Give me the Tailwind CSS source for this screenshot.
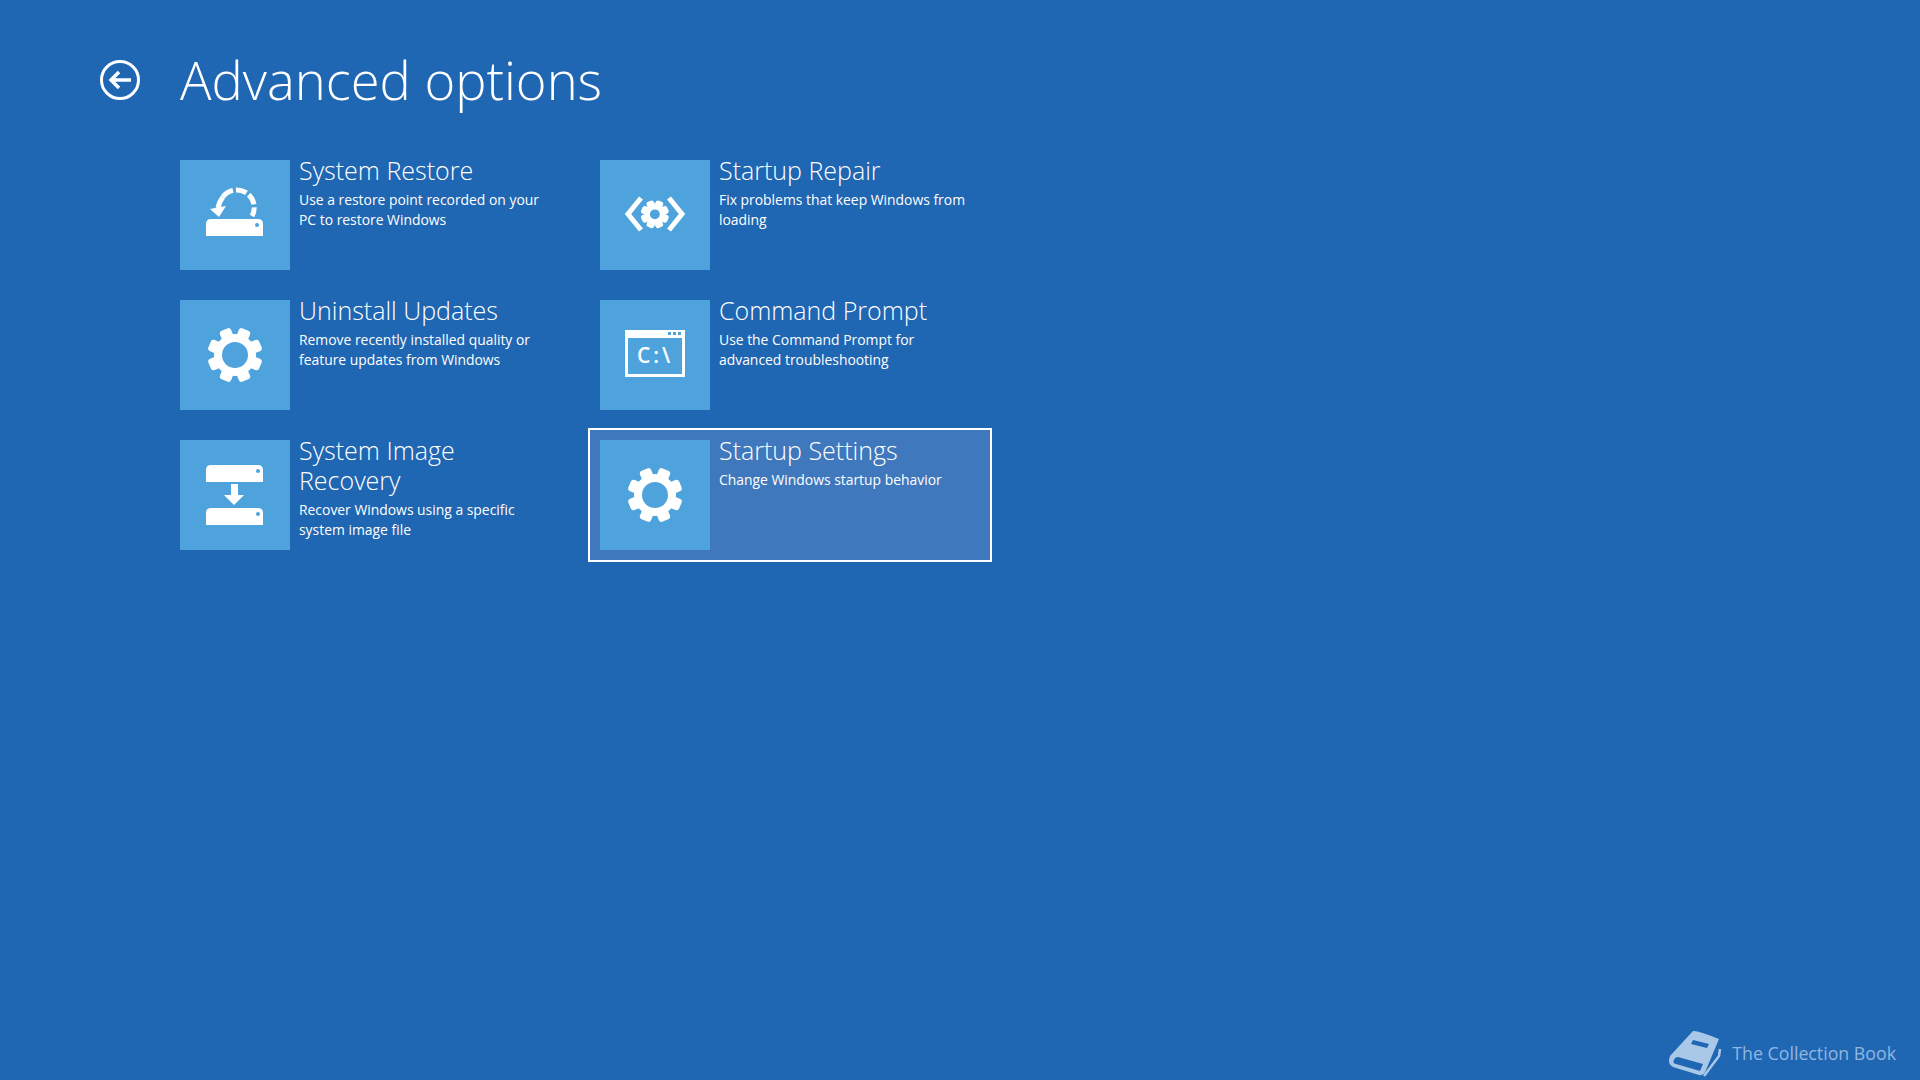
<!DOCTYPE html>
<html lang="en">
  <head>
    <meta charset="UTF-8" />
    <title>Advanced options</title>
    <script src="https://cdn.jsdelivr.net/npm/@tailwindcss/browser@4"></script>
  </head>
  <body class="bg-[#1f66b3] font-['Open_Sans',sans-serif] text-white">
    <svg class="hidden">
      <symbol id="gear" viewBox="0 0 110 110">
        <g fill="#fff">
          <rect x="49" y="27.5" width="12" height="55" rx="3" transform="rotate(22.5 55 55)" />
          <rect x="49" y="27.5" width="12" height="55" rx="3" transform="rotate(67.5 55 55)" />
          <rect x="49" y="27.5" width="12" height="55" rx="3" transform="rotate(112.5 55 55)" />
          <rect x="49" y="27.5" width="12" height="55" rx="3" transform="rotate(157.5 55 55)" />
        </g>
        <circle cx="55" cy="55" r="17" fill="none" stroke="#fff" stroke-width="8" />
        <circle cx="55" cy="55" r="13" fill="#4fa3dd" />
      </symbol>
    </svg>

    <div class="flex h-screen w-full flex-col overflow-hidden">
      <header class="flex h-[148px] items-start pt-[45px]">
        <a href="#" class="ml-[100px] mt-[15px] block h-10 w-10">
          <svg viewBox="0 0 40 40" class="h-10 w-10" fill="none" stroke="#fff">
            <circle cx="20" cy="20" r="18.5" stroke-width="3" />
            <path d="M31 20H11M19 12l-8 8 8 8" stroke-width="3.5" />
          </svg>
        </a>
        <h1 class="ml-10 text-[52.5px] leading-[70px] font-light">Advanced options</h1>
      </header>

      <main class="ml-[168px] grid w-[824px] grid-cols-2 gap-x-4 gap-y-[6px]">
        <button class="flex h-[134px] w-[404px] border-2 border-transparent p-[10px] text-left">
          <span class="block h-[110px] w-[110px] shrink-0 bg-[#4fa3dd]">
            <svg viewBox="0 0 110 110" class="h-[110px] w-[110px]">
              <path d="M26 64q0-5 5-5h47q5 0 5 5v12H26z" fill="#fff" />
              <circle cx="77" cy="65" r="2" fill="#4fa3dd" />
              <path d="M72 56A17.5 17.5 0 0 0 42 38" fill="none" stroke="#fff" stroke-width="5" stroke-dasharray="9 3 11 3 11 3 12" />
              <path d="M43 37Q39 42 38 48" fill="none" stroke="#fff" stroke-width="5" />
              <path d="M30 49l16-3-7 11z" fill="#fff" />
            </svg>
          </span>
          <span class="ml-[9px] block w-[255px]">
            <span class="-mt-[5px] block text-[25px] leading-[30px] font-light">System Restore</span>
            <span class="mt-[5px] block text-[13.9px] leading-5">Use a restore point recorded on your PC to restore Windows</span>
          </span>
        </button>

        <button class="flex h-[134px] w-[404px] border-2 border-transparent p-[10px] text-left">
          <span class="block h-[110px] w-[110px] shrink-0 bg-[#4fa3dd]">
            <svg viewBox="0 0 110 110" class="h-[110px] w-[110px]" fill="none" stroke="#fff" stroke-width="5">
              <path d="M41 38L28 54l13 16M69 38l13 16-13 16" />
              <g transform="translate(29 28.5) scale(.47)">
                <use href="#gear" width="110" height="110" />
              </g>
            </svg>
          </span>
          <span class="ml-[9px] block w-[255px]">
            <span class="-mt-[5px] block text-[25px] leading-[30px] font-light">Startup Repair</span>
            <span class="mt-[5px] block text-[13.9px] leading-5">Fix problems that keep Windows from loading</span>
          </span>
        </button>

        <button class="flex h-[134px] w-[404px] border-2 border-transparent p-[10px] text-left">
          <span class="block h-[110px] w-[110px] shrink-0 bg-[#4fa3dd]">
            <svg viewBox="0 0 110 110" class="h-[110px] w-[110px]"><use href="#gear" width="110" height="110" /></svg>
          </span>
          <span class="ml-[9px] block w-[255px]">
            <span class="-mt-[5px] block text-[25px] leading-[30px] font-light">Uninstall Updates</span>
            <span class="mt-[5px] block text-[13.9px] leading-5">Remove recently installed quality or feature updates from Windows</span>
          </span>
        </button>

        <button class="flex h-[134px] w-[404px] border-2 border-transparent p-[10px] text-left">
          <span class="block h-[110px] w-[110px] shrink-0 bg-[#4fa3dd]">
            <svg viewBox="0 0 110 110" class="h-[110px] w-[110px]">
              <path fill="#fff" fill-rule="evenodd" d="M25 30h60v47H25zM28 38v36h54V38z" />
              <path fill="#4fa3dd" d="M68 32h3v3h-3zM73 32h3v3h-3zM78 32h3v3h-3z" />
              <text x="37" y="63" fill="#fff" font-size="21" letter-spacing="3" font-family="Open Sans" font-weight="600">C:\</text>
            </svg>
          </span>
          <span class="ml-[9px] block w-[255px]">
            <span class="-mt-[5px] block text-[25px] leading-[30px] font-light">Command Prompt</span>
            <span class="mt-[5px] block text-[13.9px] leading-5">Use the Command Prompt for advanced troubleshooting</span>
          </span>
        </button>

        <button class="flex h-[134px] w-[404px] border-2 border-transparent p-[10px] text-left">
          <span class="block h-[110px] w-[110px] shrink-0 bg-[#4fa3dd]">
            <svg viewBox="0 0 110 110" class="h-[110px] w-[110px]">
              <path d="M26 30q0-5 5-5h47q5 0 5 5v12H26zM26 73q0-5 5-5h47q5 0 5 5v12H26z" fill="#fff" />
              <circle cx="78" cy="31" r="2" fill="#4fa3dd" />
              <circle cx="78" cy="74" r="2" fill="#4fa3dd" />
              <path d="M51 44h7v11h6L54 65 44 55h7z" fill="#fff" />
            </svg>
          </span>
          <span class="ml-[9px] block w-[255px]">
            <span class="-mt-[5px] block text-[25px] leading-[30px] font-light">System Image Recovery</span>
            <span class="mt-[5px] block text-[13.9px] leading-5">Recover Windows using a specific system image file</span>
          </span>
        </button>

        <button class="flex h-[134px] w-[404px] border-2 border-white bg-[#3f78bd] p-[10px] text-left">
          <span class="block h-[110px] w-[110px] shrink-0 bg-[#4fa3dd]">
            <svg viewBox="0 0 110 110" class="h-[110px] w-[110px]"><use href="#gear" width="110" height="110" /></svg>
          </span>
          <span class="ml-[9px] block w-[255px]">
            <span class="-mt-[5px] block text-[25px] leading-[30px] font-light">Startup Settings</span>
            <span class="mt-[5px] block text-[13.9px] leading-5">Change Windows startup behavior</span>
          </span>
        </button>
      </main>

      <footer class="mt-auto flex items-center justify-end pr-6 text-[#8fb7e0]">
        <svg viewBox="0 0 80 55" class="h-[55px] w-[80px] translate-x-[2px] translate-y-[1px]">
          <path fill="#a9c8e8" d="M31 5Q35 4 57 13L44 44Q42 50 37 49L11 41Q5 38 8 30Z" />
          <path fill="#1f66b3" d="M12 34Q10 37 14 38L38 45 41 38 16 31Q13 31 12 34ZM31 14L47 18 45 22 29 18Z" />
          <path fill="none" stroke="#a9c8e8" stroke-width="2.5" d="M58 23L57 30 42 50" />
        </svg>
        <span class="ml-[-8px] translate-y-[1px] text-[17.75px]">The Collection Book</span>
      </footer>
    </div>
  </body>
</html>
